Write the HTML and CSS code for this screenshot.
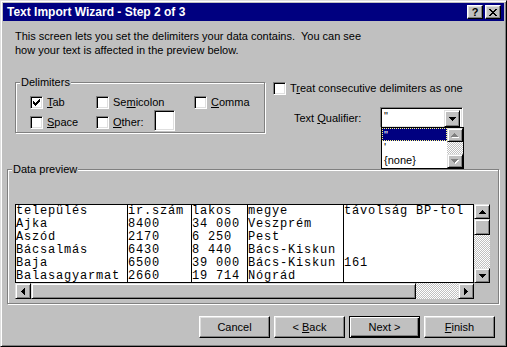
FILE: index.html
```html
<!DOCTYPE html>
<html>
  <head>
    <meta charset="utf-8"/>
    <link rel="stylesheet" href="styles.css">
  </head>
  <body>
    <div class="window">
      <div class="titlebar">
        <span class="title">Text Import Wizard - Step 2 of 3</span>
        <span class="capbtn help">?</span>
        <span class="capbtn close">
          <svg width="8" height="7" viewBox="0 0 8 7"><path d="M0 0h2v1h-2zM6 0h2v1h-2zM1 1h2v1h-2zM5 1h2v1h-2zM2 2h4v1h-4zM3 3h2v1h-2zM2 4h4v1h-4zM1 5h2v1h-2zM5 5h2v1h-2zM0 6h2v1h-2zM6 6h2v1h-2z"/></svg>
        </span>
      </div>

      <div class="content">
        <p class="intro">This screen lets you set the delimiters your data contains.&nbsp; You can see<br>how your text is affected in the preview below.</p>

        <div class="options">
          <div class="group delimiters">
            <span class="legend">Delimiters</span>
            <div class="delims">
              <label class="check"><span class="box"><svg width="7" height="7" viewBox="0 0 7 7"><path d="M0 2h1v3h-1zM1 3h1v3h-1zM2 4h1v3h-1zM3 3h1v3h-1zM4 2h1v3h-1zM5 1h1v3h-1zM6 0h1v3h-1z"/></svg></span><span><u>T</u>ab</span></label>
              <label class="check"><span class="box"></span><span>Se<u>m</u>icolon</span></label>
              <label class="check"><span class="box"></span><span><u>C</u>omma</span></label>
              <label class="check"><span class="box"></span><span><u>S</u>pace</span></label>
              <label class="check"><span class="box"></span><span><u>O</u>ther:</span><span class="field other"></span></label>
            </div>
          </div>

          <div class="side">
            <label class="check"><span class="box"></span><span>T<u>r</u>eat consecutive delimiters as one</span></label>
            <div class="qualifier">
              <span class="qlabel">Text <u>Q</u>ualifier:</span>
              <div class="combo field">
                <span class="combo-text">"</span>
                <span class="raised combo-btn">
                  <svg width="7" height="4" viewBox="0 0 7 4"><path d="M0 0h7v1h-1v1h-1v1h-1v1h-1v-1h-1v-1h-1v-1h-1z"/></svg>
                </span>
                <!-- open drop-down list -->
                <div class="droplist">
                  <div class="items">
                    <div class="item selected">"</div>
                    <div class="item">'</div>
                    <div class="item">{none}</div>
                  </div>
                  <div class="listscroll">
                    <span class="raised lsbtn"><svg width="8" height="5" viewBox="0 0 8 5"><path class="hl" d="M4 1h1v1h1v1h1v1h1v1h-7v-1h1v-1h1v-1h1z"/><path class="dim" d="M3 0h1v1h1v1h1v1h1v1h-7v-1h1v-1h1v-1h1z"/></svg></span>
                    <span class="checker"></span>
                    <span class="raised lsbtn"><svg width="8" height="5" viewBox="0 0 8 5"><path class="hl" d="M1 1h7v1h-1v1h-1v1h-1v1h-1v-1h-1v-1h-1v-1h-1z"/><path class="dim" d="M0 0h7v1h-1v1h-1v1h-1v1h-1v-1h-1v-1h-1v-1h-1z"/></svg></span>
                  </div>
                </div>
              </div>
            </div>
          </div>
        </div>

        <div class="group preview-group">
          <span class="legend">Data preview</span>
          <div class="preview">
            <div class="grid">
              <table>
                <colgroup>
                  <col class="c1"><col class="c2"><col class="c3"><col class="c4"><col class="c5">
                </colgroup>
                <tr><td>település</td><td>ir.szám</td><td>lakos</td><td>megye</td><td>távolság BP-tol</td></tr>
                <tr><td>Ajka</td><td>8400</td><td>34 000</td><td>Veszprém</td><td></td></tr>
                <tr><td>Aszód</td><td>2170</td><td>6 250</td><td>Pest</td><td></td></tr>
                <tr><td>Bácsalmás</td><td>6430</td><td>8 440</td><td>Bács-Kiskun</td><td></td></tr>
                <tr><td>Baja</td><td>6500</td><td>39 000</td><td>Bács-Kiskun</td><td>161</td></tr>
                <tr><td>Balasagyarmat</td><td>2660</td><td>19 714</td><td>Nógrád</td><td></td></tr>
              </table>
            </div>
            <div class="vscroll">
              <span class="raised sbtn"><svg width="7" height="4" viewBox="0 0 7 4"><path d="M3 0h1v1h1v1h1v1h1v1h-7v-1h1v-1h1v-1h1z"/></svg></span>
              <span class="raised vthumb"></span>
              <span class="checker"></span>
              <span class="raised sbtn"><svg width="7" height="4" viewBox="0 0 7 4"><path d="M0 0h7v1h-1v1h-1v1h-1v1h-1v-1h-1v-1h-1v-1h-1z"/></svg></span>
            </div>
            <div class="hscroll">
              <span class="raised sbtn"><svg width="4" height="7" viewBox="0 0 4 7"><path d="M3 0h1v7h-1v-1h-1v-1h-1v-1h-1v-1h1v-1h1v-1h1z"/></svg></span>
              <span class="raised hthumb"></span>
              <span class="checker"></span>
              <span class="raised sbtn"><svg width="4" height="7" viewBox="0 0 4 7"><path d="M0 0h1v1h1v1h1v1h1v1h-1v1h-1v1h-1v1h-1z"/></svg></span>
            </div>
            <div class="corner"></div>
          </div>
        </div>

        <div class="buttons">
          <span class="btn"><span>Cancel</span></span>
          <span class="btn"><span>&lt; <u>B</u>ack</span></span>
          <span class="btn default"><span>Next &gt;</span></span>
          <span class="btn"><span><u>F</u>inish</span></span>
        </div>
      </div>
    </div>
  </body>
</html>
```

FILE: styles.css
```css
body {
  margin: 0;
  font-family: "Liberation Sans", Arial, sans-serif;
  font-size: 11px;
  color: #000;
}
svg {
  display: block;
  shape-rendering: crispEdges;
}

/* window frame */
.window {
  width: 507px;
  height: 347px;
  box-sizing: border-box;
  background: #c0c0c0;
  border: 1px solid;
  border-color: #dfdfdf #000 #000 #dfdfdf;
  box-shadow: inset 1px 1px #fff, inset -1px -1px #808080;
  padding: 2px;
  display: flex;
  flex-direction: column;
}
.titlebar {
  height: 18px;
  flex: none;
  background: #000080;
  color: #fff;
  display: flex;
  align-items: center;
  padding: 0 3px 0 4px;
}
.title {
  flex: 1;
  font-weight: bold;
  font-size: 12px;
}
.capbtn {
  width: 16px;
  height: 14px;
  box-sizing: border-box;
  background: #c0c0c0;
  color: #000;
  font-weight: bold;
  font-size: 11px;
  border: 1px solid;
  border-color: #fff #000 #000 #fff;
  box-shadow: inset -1px -1px #808080, inset 1px 1px #dfdfdf;
  display: flex;
  align-items: center;
  justify-content: center;
}
.help {
  margin-right: 2px;
}

/* shared 3d bits */
.raised {
  box-sizing: border-box;
  background: #c0c0c0;
  border: 1px solid;
  border-color: #dfdfdf #000 #000 #dfdfdf;
  box-shadow: inset 1px 1px #fff, inset -1px -1px #808080;
  display: flex;
  align-items: center;
  justify-content: center;
}
.field {
  box-sizing: border-box;
  background: #fff;
  border: 1px solid;
  border-color: #808080 #fff #fff #808080;
  box-shadow: inset 1px 1px #000, inset -1px -1px #dfdfdf;
}
.checker {
  flex: 1;
  background: repeating-conic-gradient(#fff 0 25%, #c0c0c0 0 50%) 0 0 / 2px 2px;
}

.content {
  flex: 1;
}
.intro {
  margin: 8px 0 0 12px;
  line-height: 14px;
}

/* group boxes */
.group {
  position: relative;
  box-sizing: border-box;
  border: 1px solid #808080;
  box-shadow: inset 1px 1px #fff, 1px 1px #fff;
}
.legend {
  position: absolute;
  top: -7px;
  left: 4px;
  padding: 0 1px;
  line-height: 13px;
  background: #c0c0c0;
}

.options {
  display: flex;
  align-items: flex-start;
  margin: 25px 0 0 12px;
}
.delimiters {
  width: 250px;
  height: 51px;
  padding: 9px 0 0 14px;
}
.delims {
  display: grid;
  grid-template-columns: 66px 98px auto;
  grid-auto-rows: 20px;
  align-items: center;
}
.check {
  display: flex;
  align-items: center;
  gap: 4px;
  white-space: nowrap;
  line-height: 13px;
}
.box {
  width: 13px;
  height: 13px;
  flex: none;
  box-sizing: border-box;
  padding: 2px;
  background: #fff;
  border: 1px solid;
  border-color: #808080 #fff #fff #808080;
  box-shadow: inset 1px 1px #000, inset -1px -1px #dfdfdf;
}
.other {
  width: 21px;
  height: 21px;
  margin: 0 0 4px 6px;
}

.side {
  margin-left: 8px;
}
.qualifier {
  display: flex;
  align-items: center;
  margin-top: 12px;
}
.qlabel {
  width: 107px;
  flex: none;
  white-space: nowrap;
  box-sizing: border-box;
  padding-left: 21px;
}
.combo {
  position: relative;
  width: 83px;
  height: 21px;
  padding: 2px;
  display: flex;
}
.combo-text {
  flex: 1;
  padding-left: 1px;
  line-height: 13px;
}
.combo-btn {
  width: 16px;
  height: 17px;
}
.droplist {
  position: absolute;
  top: 100%;
  left: 0;
  width: 83px;
  height: 42px;
  box-sizing: border-box;
  border: 1px solid #000;
  background: #fff;
  display: flex;
}
.items {
  flex: 1;
}
.item {
  height: 13px;
  line-height: 12px;
  padding-left: 2px;
  box-sizing: border-box;
}
.item.selected {
  background: #000080;
  color: #fff;
  border: 1px dotted #ffff80;
  padding-left: 1px;
}
.listscroll {
  width: 16px;
  display: flex;
  flex-direction: column;
}
.lsbtn {
  height: 14px;
}
.lsbtn .hl {
  fill: #fff;
}
.lsbtn .dim {
  fill: #808080;
}

/* data preview */
.preview-group {
  width: 492px;
  height: 135px;
  margin: 36px 0 0 4px;
  padding: 34px 0 0 7px;
}
.preview {
  display: grid;
  grid-template-columns: 459px 16px;
  grid-template-rows: 79px 16px;
}
.grid {
  background: #fff;
  border: 1px solid #000;
  box-sizing: border-box;
  overflow: hidden;
}
.grid table {
  border-spacing: 0;
  table-layout: fixed;
  width: 457px;
  font-family: "Liberation Mono", "Courier New", monospace;
  font-size: 12px;
  letter-spacing: 0.8px;
  line-height: 13px;
}
.grid td {
  padding: 0;
  height: 13px;
  white-space: pre;
  overflow: hidden;
  vertical-align: top;
  border-left: 1px solid #000;
}
.grid td:first-child {
  border-left: 0;
}
.c1 { width: 111px; }
.c2 { width: 64px; }
.c3 { width: 56px; }
.c4 { width: 96px; }
.c5 { width: 130px; }

.vscroll {
  display: flex;
  flex-direction: column;
}
.vscroll .sbtn {
  height: 15px;
}
.vthumb {
  height: 16px;
}
.hscroll {
  display: flex;
}
.hscroll .sbtn {
  width: 16px;
}
.hthumb {
  width: 385px;
}

/* bottom buttons */
.buttons {
  display: flex;
  justify-content: flex-end;
  gap: 4px;
  margin: 12px 9px 0 0;
}
.btn {
  width: 71px;
  height: 22px;
  box-sizing: border-box;
  border: 1px solid;
  border-color: #fff #000 #000 #fff;
  box-shadow: inset -1px -1px #808080, inset 1px 1px #dfdfdf;
  display: flex;
  align-items: center;
  justify-content: center;
}
.btn.default {
  border-color: #000;
  box-shadow: inset 1px 1px #fff, inset -1px -1px #000, inset -2px -2px #808080;
}
```
